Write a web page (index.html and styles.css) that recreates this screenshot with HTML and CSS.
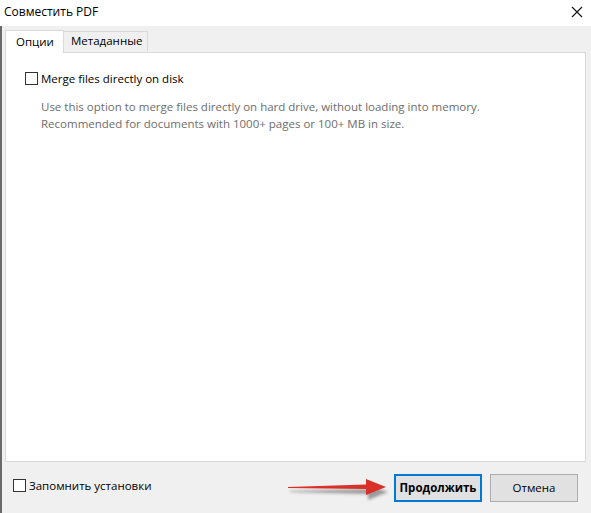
FILE: index.html
```html
<!DOCTYPE html>
<html lang="ru">
<head>
<meta charset="utf-8">
<title>Совместить PDF</title>
<link rel="stylesheet" href="styles.css">
</head>
<body>
<div class="window">
  <div class="titlebar">
    <span class="title">Совместить PDF</span>
    <svg class="close" width="12" height="12" viewBox="0 0 12 12"><path d="M1 1 L11 11 M11 1 L1 11" stroke="#111" stroke-width="1.1" fill="none"/></svg>
  </div>
  <div class="main">
    <div class="tabs">
      <div class="tab active">Опции</div>
      <div class="tab">Метаданные</div>
    </div>
    <div class="panel">
      <label class="check">
        <span class="box"></span>
        <span>Merge files directly on disk</span>
      </label>
      <p class="desc">Use this option to merge files directly on hard drive, without loading into memory.<br>Recommended for documents with 1000+ pages or 100+ MB in size.</p>
    </div>
    <div class="footer">
      <label class="check remember">
        <span class="box"></span>
        <span>Запомнить установки</span>
      </label>
      <div class="buttons">
        <button class="btn primary">Продолжить</button>
        <button class="btn">Отмена</button>
      </div>
      <svg class="arrow" width="110" height="26" viewBox="0 0 110 26">
        <defs>
          <filter id="sh" x="-20%" y="-50%" width="140%" height="200%">
            <feGaussianBlur stdDeviation="1.6"/>
          </filter>
        </defs>
        <g transform="translate(2,4)" filter="url(#sh)" opacity="0.55">
          <path d="M0 9 L78 7 L78 3 L98 10 L78 18 L78 12 L0 10 Z" fill="#555"/>
        </g>
        <path d="M0 9 L78 6.5 L78 1 L98 9 L78 17 L78 11 L0 10 Z" fill="#d9302a"/>
      </svg>
    </div>
  </div>
</div>
</body>
</html>
```

FILE: styles.css
```css
* { box-sizing: border-box; }
html, body { margin: 0; padding: 0; }
body {
  width: 591px;
  height: 513px;
  overflow: hidden;
  background: #f0f0f0;
  font-family: "Segoe UI", "Open Sans", "Noto Sans", sans-serif;
  font-size: 11.5px;
  color: #000;
}
.window {
  display: flex;
  flex-direction: column;
  height: 513px;
}
.titlebar {
  height: 26px;
  background: #fff;
  display: flex;
  align-items: center;
  justify-content: space-between;
  padding: 0 8px 0 4px;
}
.title {
  font-size: 12px;
  line-height: 1;
  margin-top: -2px;
}
.close { margin-top: -2px; }
.main {
  flex: 1;
  display: flex;
  flex-direction: column;
  border-left: 2px solid #6a6a6a;
}
.tabs {
  display: flex;
  align-items: flex-end;
  height: 26px;
  padding-left: 3px;
  position: relative;
  z-index: 1;
}
.tab {
  height: 20px;
  border: 1px solid #d9d9d9;
  border-bottom: none;
  border-left: none;
  background: #f0f0f0;
  line-height: 18px;
  margin-bottom: 1px;
}
.tab.active {
  height: 23px;
  width: 59px;
  padding-left: 10px;
  background: #fff;
  border-left: 1px solid #d9d9d9;
  margin-bottom: -1px;
  line-height: 21px;
}
.tab:not(.active) { width: 84px; padding-left: 7px; }
.panel {
  height: 410px;
  margin: 0 5px 0 3px;
  background: #fff;
  border: 1px solid #d9d9d9;
  padding: 18px 0 0 19px;
}
.check {
  display: flex;
  align-items: center;
  gap: 3px;
}
.box {
  width: 13px;
  height: 13px;
  border: 1px solid #333;
  background: #fff;
  flex: none;
}
.desc {
  margin: 12px 0 0 16px;
  color: #6d6d6d;
  line-height: 17px;
}
.footer {
  position: relative;
  flex: 1;
  display: flex;
  align-items: center;
  justify-content: space-between;
  padding: 0 13px 0 11px;
}
.remember { margin-top: -5px; }
.buttons {
  display: flex;
  gap: 8px;
}
.btn {
  width: 88px;
  height: 28px;
  font: inherit;
  background: #e1e1e1;
  border: 1px solid #adadad;
  color: #000;
  padding: 0;
}
.btn.primary {
  border: 2px solid #0078d7;
  font-weight: bold;
}
.arrow {
  position: absolute;
  left: 286px;
  top: 16px;
}
```
